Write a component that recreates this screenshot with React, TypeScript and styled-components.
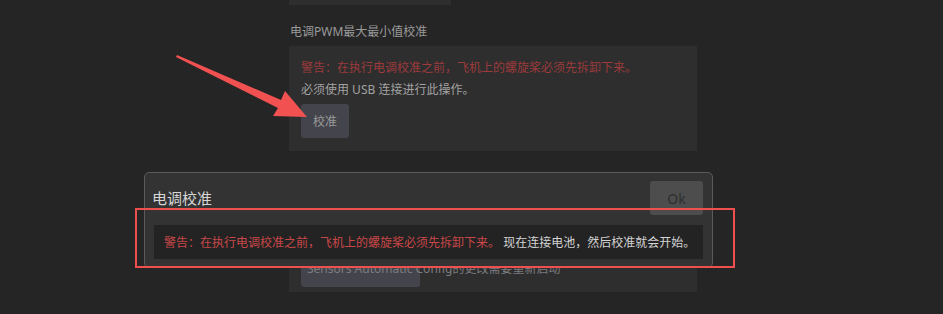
import React from "react";
import styled, { createGlobalStyle } from "styled-components";

const Global = createGlobalStyle`
  html, body { margin: 0; padding: 0; background: #252525; }
  body {
    font-family: "Noto Sans", "Noto Sans CJK SC", sans-serif;
    width: 943px; height: 314px; overflow: hidden;
  }
`;

const Page = styled.div`
  position: relative;
  width: 943px;
  height: 314px;
  background: #252525;
`;

const Column = styled.div`
  margin-left: 289px;
  width: 408px;
  display: flex;
  flex-direction: column;
`;

const Stub = styled.div`
  width: 162px;
  height: 5px;
  background: #2e2e2e;
`;

const Label = styled.div<{ $top: number }>`
  margin-top: ${(p) => p.$top}px;
  margin-bottom: 6px;
  padding-left: 1px;
  font-size: 12px;
  line-height: 16px;
  color: #9a9a9a;
`;

const Panel = styled.div<{ $h: number }>`
  background: #2e2e2e;
  height: ${(p) => p.$h}px;
  box-sizing: border-box;
  padding: 14px 12px 13px;
  display: flex;
  flex-direction: column;
`;

const Warn = styled.div`
  font-size: 12px;
  line-height: 16px;
  color: #9c3a3c;
`;

const Line = styled.div`
  margin-top: 6px;
  font-size: 12px;
  line-height: 16px;
  color: #a2a2a2;
`;

const Btn = styled.button<{ $w?: number; $h?: number }>`
  all: unset;
  box-sizing: border-box;
  width: ${(p) => (p.$w ? `${p.$w}px` : "auto")};
  height: ${(p) => (p.$h ? p.$h : 34)}px;
  padding: 0 12px;
  background: #44454c;
  border-radius: 3px;
  color: #9a9a9a;
  font-size: 12px;
  display: inline-flex;
  align-items: center;
  justify-content: center;
`;

const BtnRow = styled.div<{ $top: number }>`
  margin-top: ${(p) => p.$top}px;
  display: flex;
`;

const Stack = styled.div`
  margin-top: 28px;
  display: grid;
  & > * { grid-area: 1 / 1; }
`;

const StackText = styled.span`
  align-self: start;
  padding-left: 6px;
  font-size: 12px;
  line-height: 16px;
  color: #7c7c80;
  white-space: nowrap;
`;

const Dialog = styled.div`
  position: absolute;
  left: 144px;
  top: 172px;
  width: 569px;
  height: 96px;
  box-sizing: border-box;
  background: #333333;
  border: 1px solid #5a5a5a;
  border-radius: 5px;
  padding: 8px 9px 8px 9px;
  display: flex;
  flex-direction: column;
  gap: 10px;
`;

const DialogHead = styled.div`
  display: flex;
  align-items: center;
  justify-content: space-between;
`;

const Title = styled.div`
  margin-left: -2px;
  font-size: 15px;
  line-height: 20px;
  color: #d6d6d6;
`;

const OkBtn = styled.button`
  all: unset;
  width: 53px;
  height: 34px;
  border-radius: 3px;
  background: #4d4d4d;
  color: #2f2f2f;
  font-size: 14px;
  display: flex;
  align-items: center;
  justify-content: center;
`;

const MsgBox = styled.div`
  height: 34px;
  background: #232323;
  padding-left: 10px;
  display: flex;
  align-items: center;
  font-size: 12px;
  white-space: nowrap;
`;

const Red = styled.span`
  color: #c94748;
`;

const Light = styled.span`
  color: #d4d4d4;
`;

const Highlight = styled.div`
  position: absolute;
  left: 135px;
  top: 208px;
  width: 600px;
  height: 60px;
  box-sizing: border-box;
  border: 2px solid #f04f50;
  pointer-events: none;
`;

const ArrowSvg = styled.svg`
  position: absolute;
  left: 0;
  top: 0;
  pointer-events: none;
`;

export default function App() {
  return (
    <Page>
      <Global />
      <Column>
        <Stub />
        <Label $top={19}>电调PWM最大最小值校准</Label>
        <Panel $h={105}>
          <Warn>警告：在执行电调校准之前，飞机上的螺旋桨必须先拆卸下来。</Warn>
          <Line>必须使用 USB 连接进行此操作。</Line>
          <BtnRow $top={6}>
            <Btn>校准</Btn>
          </BtnRow>
        </Panel>
        <Label $top={24}>传感器设置</Label>
        <Panel $h={95}>
          <Line>保存后需要重新启动飞控。</Line>
          <Stack>
            <Btn $w={119} $h={26} />
            <StackText>Sensors Automatic Config的更改需要重新启动</StackText>
          </Stack>
        </Panel>
      </Column>

      <ArrowSvg width="943" height="314" viewBox="0 0 943 314">
        <polygon
          points="177,55 281,100 285,91 307,117 273,116 278,108 176,57"
          fill="#f25152"
        />
      </ArrowSvg>

      <Dialog>
        <DialogHead>
          <Title>电调校准</Title>
          <OkBtn>Ok</OkBtn>
        </DialogHead>
        <MsgBox>
          <Red>警告：在执行电调校准之前，飞机上的螺旋桨必须先拆卸下来。</Red>
          <Light>&nbsp;现在连接电池，然后校准就会开始。</Light>
        </MsgBox>
      </Dialog>
      <Highlight />
    </Page>
  );
}
